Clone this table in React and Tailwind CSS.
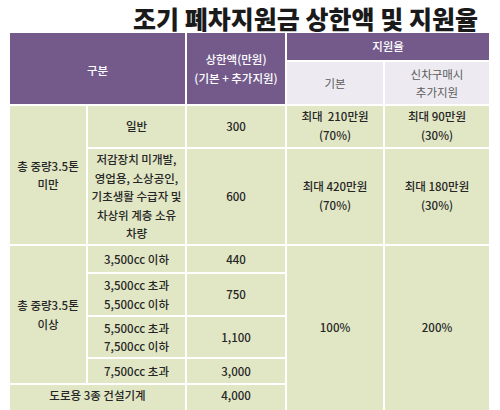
export default function App() {
  const font = { fontFamily: '"Noto Sans CJK KR", "Noto Sans", sans-serif' };
  const cell = 'bg-[#e1e6c5] flex items-center justify-center text-center text-[#262626]';

  return (
    <div className="w-[500px] h-[410px] overflow-hidden bg-white" style={font}>
      {/* Title */}
      <div className="h-[33px] flex items-center justify-end pr-[22px] pt-[4px]">
        <h1 className="text-[25px] font-black leading-none text-[#1a1a1a]">
          조기 폐차지원금 상한액 및 지원율
        </h1>
      </div>

      {/* Table */}
      <div className="ml-[10px] w-[479px] grid grid-cols-[76px_97px_98px_96px_104px] grid-rows-[27px_42px_41px_95px_26px_41px_40px_24px_30px] gap-[2px] bg-white text-[11.5px] leading-[18.5px] font-medium">
        <div className="row-span-2 col-span-2 bg-[#735a8b] text-white flex items-center justify-center pt-[3px]">구분</div>
        <div className="row-span-2 bg-[#735a8b] text-white flex items-center justify-center text-center">
          상한액(만원)<br />(기본 + 추가지원)
        </div>
        <div className="col-span-2 bg-[#735a8b] text-white flex items-center justify-center">지원율</div>
        <div className="bg-[#edebf1] text-[#5c5c5c] font-normal flex items-center justify-center">기본</div>
        <div className="bg-[#edebf1] text-[#5c5c5c] font-normal flex items-center justify-center text-center">
          신차구매시<br />추가지원
        </div>

        {/* 3.5톤 미만 */}
        <div className={`${cell} row-span-2`}>총 중량3.5톤<br />미만</div>
        <div className={cell}>일반</div>
        <div className={cell}>300</div>
        <div className={`${cell} items-start pt-[1px]`}>최대&nbsp; 210만원<br />(70%)</div>
        <div className={`${cell} items-start pt-[1px]`}>최대 90만원<br />(30%)</div>

        <div className={cell}>
          저감장치 미개발,<br />영업용, 소상공인,<br />기초생활 수급자 및<br />차상위 계층 소유<br />차량
        </div>
        <div className={cell}>600</div>
        <div className={`${cell} items-start pt-[28px]`}>최대 420만원<br />(70%)</div>
        <div className={`${cell} items-start pt-[28px]`}>최대 180만원<br />(30%)</div>

        {/* 3.5톤 이상 */}
        <div className={`${cell} row-span-4`}>총 중량3.5톤<br />이상</div>
        <div className={cell}>3,500cc 이하</div>
        <div className={cell}>440</div>
        <div className={`${cell} row-span-5 items-start pt-[72px]`}>100%</div>
        <div className={`${cell} row-span-5 items-start pt-[72px]`}>200%</div>

        <div className={cell}>3,500cc 초과<br />5,500cc 이하</div>
        <div className={cell}>750</div>

        <div className={cell}>5,500cc 초과<br />7,500cc 이하</div>
        <div className={cell}>1,100</div>

        <div className={cell}>7,500cc 초과</div>
        <div className={cell}>3,000</div>

        <div className={`${cell} col-span-2 items-start pt-[1px]`}>도로용 3종 건설기계</div>
        <div className={`${cell} items-start pt-[1px]`}>4,000</div>
      </div>
    </div>
  );
}
